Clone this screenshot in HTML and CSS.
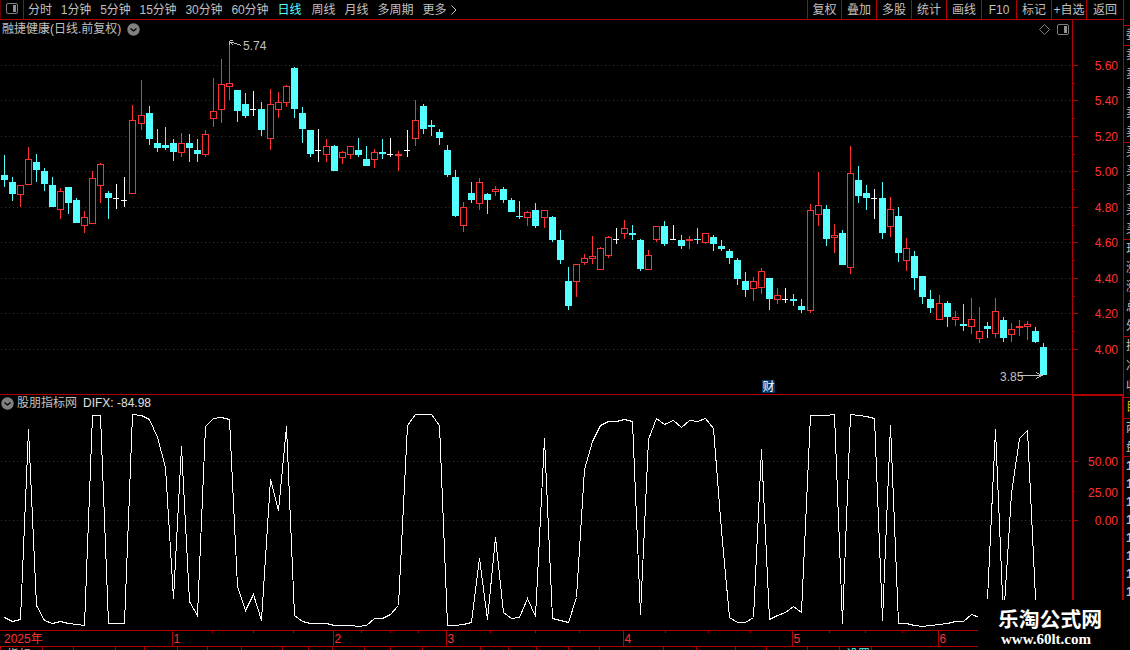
FILE: index.html
```
<!DOCTYPE html>
<html lang="zh-CN">
<head>
  <meta charset="UTF-8">
  <title>融捷健康 日线</title>
  <link rel="stylesheet" href="styles.css">
</head>
<body>
<div class="app">
  <div class="main">
    <div class="toolbar">
      <div class="toolbar-icon">
        <svg width="12" height="12" viewBox="0 0 12 12">
          <rect x="0.5" y="0.5" width="11" height="10" rx="1.5" class="icon-line"></rect>
          <rect x="7" y="2" width="3" height="7" class="icon-fill"></rect>
        </svg>
      </div>
      <div class="period">
        <span>分时</span><span>1分钟</span><span>5分钟</span><span>15分钟</span><span>30分钟</span><span>60分钟</span><span class="on">日线</span><span>周线</span><span>月线</span><span>多周期</span><span class="more">更多<svg width="6" height="10" viewBox="0 0 6 10"><path d="M0.5 0.5L5 5L0.5 9.5" class="arrow-line"></path></svg></span>
      </div>
      <div class="tools">
        <span class="first">复权</span><span>叠加</span><span>多股</span><span>统计</span><span>画线</span><span>F10</span><span>标记</span><span>+自选</span><span>返回</span>
      </div>
    </div>

    <!--K线-->
    <div class="panel kline">
      <div class="panel-title">
        <span>融捷健康(日线.前复权)</span>
        <svg width="13" height="13" viewBox="0 0 13 13"><circle cx="6.5" cy="6.5" r="6.2" class="round"></circle><path d="M3.5 5.5L6.5 8L9.5 5.5" class="round-arrow"></path></svg>
      </div>
      <svg id="kline" width="1123" height="374" viewBox="0 20 1123 374" shape-rendering="crispEdges">
        <g id="kgrid"></g>
        <g id="candles"></g>
        <path d="M229.5 40.5h3M229.5 41v4M230 42.5h3L241 45.5M231 43l2 2" class="mark-line"></path>
        <text x="243" y="50" class="mark">5.74</text>
        <path d="M1018 375.5h24M1036 372.5l6 3l-6 3" class="mark-line"></path>
        <text x="1000" y="381" class="mark">3.85</text>
        <path d="M1044.5 24.5l5 5l-5 5l-5 -5z" class="icon-line" shape-rendering="auto"></path>
        <rect x="1057.5" y="24.5" width="11" height="10" rx="1.5" class="icon-line" shape-rendering="auto"></rect>
        <rect x="1064" y="26" width="3" height="7" class="icon-fill"></rect>
        <path d="M762 380h11l2 2v11h-13z" class="cai"></path>
        <text x="762.5" y="391" class="cai-text">财</text>
      </svg>
    </div>

    <!--副图指标-->
    <div class="panel difx">
      <div class="panel-title">
        <svg width="13" height="13" viewBox="0 0 13 13"><circle cx="6.5" cy="6.5" r="6.2" class="round"></circle><path d="M3.5 5.5L6.5 8L9.5 5.5" class="round-arrow"></path></svg>
        <span>股朋指标网</span>
        <span class="value">DIFX: -84.98</span>
      </div>
      <svg id="difx" width="1123" height="235" viewBox="0 395 1123 235" shape-rendering="crispEdges">
        <g id="dgrid"></g>
        <polyline id="dline" class="dline"></polyline>
        <path d="M1073 395V630M1073 395h50" class="frame"></path>
        <path d="M1122.5 395V630" class="red"></path>
      </svg>
    </div>

    <svg id="dates" class="dates" width="1123" height="15" viewBox="0 631 1123 15" shape-rendering="crispEdges"></svg>
    <div id="tabs" class="tabs"></div>
  </div>

  <!--右侧盘口，只露出左边缘-->
  <div class="side">
    <div class="block h25"></div>
    <div class="block h19"><span>委</span></div>
    <div class="block h96"><span>卖</span><span>卖</span><span>卖</span><span>卖</span><span>卖</span></div>
    <div class="block h96"><span>买</span><span>买</span><span>买</span><span>买</span><span>买</span></div>
    <div class="block h96"><span>现</span><span>涨</span><span>涨</span><span>总</span><span>外</span></div>
    <div class="block h60"><span>换</span><span>净</span><span>收</span></div>
    <div class="block h20 yellow"><span>目</span></div>
    <div class="block h37"><span>两</span><span>盘</span></div>
    <div class="ticks"><span>1</span><span>1</span><span>1</span><span>1</span><span>1</span><span>1</span><span>1</span><span>1</span></div>
  </div>
</div>

<div class="watermark">
  <div class="wm-name">乐淘公式网</div>
  <div class="wm-url">www.60lt.com</div>
</div>
<script src="chart.js"></script>
</body>
</html>
```
FILE: styles.css
```
* {
  box-sizing: border-box;
}

body {
  margin: 0;
  background: #000000;
  color: #c0c0c0;
  font: 12px/18px "Liberation Sans", "Noto Sans CJK SC", sans-serif;
  overflow: hidden;
}

svg {
  display: block;
}

.app {
  display: flex;
  width: 1130px;
  height: 650px;
  overflow: hidden;
}

.main {
  width: 1123px;
  flex: none;
}

/* 顶部工具栏 */
.toolbar {
  display: flex;
  height: 20px;
  border-bottom: 1px solid #b00000;
  line-height: 20px;
  white-space: nowrap;
}

.toolbar-icon {
  width: 24px;
  padding: 3px 0 0 5px;
  border-left: 1px solid #600000;
  border-right: 1px solid #b00000;
}

.period {
  display: flex;
  gap: 9px;
  padding-left: 4px;
}

.period span:nth-child(-n+6) {
  letter-spacing: -0.1px;
}

.period .on {
  margin-right: 1px;
  color: #54ffff;
}

.period .more {
  display: flex;
  align-items: center;
  gap: 4px;
}

.tools {
  display: flex;
  margin-left: auto;
}

.tools span {
  width: 35px;
  border-left: 1px solid #b00000;
  text-align: center;
}

.tools .first {
  width: 34px;
}

.tools span:last-child {
  width: 37px;
}

/* 图表 */
.panel {
  position: relative;
  border-bottom: 1px solid #b00000;
}

.panel-title {
  position: absolute;
  display: flex;
  align-items: center;
  height: 18px;
  line-height: 20px;
  white-space: nowrap;
}

.kline .panel-title {
  left: 2px;
  top: 0;
  gap: 6px;
}

.difx .panel-title {
  left: 1px;
  top: -1px;
  gap: 3px;
}

.difx .value {
  margin-left: 3px;
  color: #e0e0e0;
}

.icon-line {
  fill: none;
  stroke: #808080;
}

.icon-fill {
  fill: #909090;
}

.arrow-line {
  fill: none;
  stroke: #c0c0c0;
}

.round {
  fill: #808080;
}

.round-arrow {
  fill: none;
  stroke: #000000;
  stroke-width: 1.3;
}

.grid {
  stroke: #900808;
  stroke-dasharray: 1 3;
}

.red {
  fill: none;
  stroke: #b00000;
}

.frame {
  fill: none;
  stroke: #b00000;
  stroke-width: 2;
}

.label {
  fill: #ff3232;
  font-size: 12px;
}

.up {
  fill: #000000;
  stroke: #ff3232;
}

.down {
  fill: #54ffff;
}

.down-line {
  stroke: #54ffff;
}

.flat {
  stroke: #ffffff;
}

.mark {
  fill: #c0c0c0;
}

.mark-line {
  fill: none;
  stroke: #c0c0c0;
}

.cai {
  fill: #003a70;
}

.cai-text {
  fill: #ffffff;
}

.dline {
  fill: none;
  stroke: #ffffff;
}

.tabs {
  display: flex;
  height: 4px;
  border-top: 1px solid #b00000;
  overflow: hidden;
}

.tabs span {
  flex: none;
  border-left: 1px solid #b00000;
  padding-left: 6px;
  line-height: 16px;
}

.tabs .on {
  color: #54ffff;
}

/* 右侧盘口 */
.side {
  width: 7px;
  flex: none;
  border-left: 1px solid #b00000;
  overflow: hidden;
}

.side span {
  width: 16px;
  flex: 1;
  padding-left: 2px;
  line-height: 19px;
}

.block {
  display: flex;
  flex-direction: column;
  border-bottom: 1px solid #b00000;
}

.h25 { height: 26px; }
.h19 { height: 20px; }
.h96 { height: 97px; }
.h60 { height: 61px; }
.h20 { height: 21px; }
.h37 { height: 38px; }

.yellow {
  color: #c0c000;
}

.ticks span {
  display: block;
  height: 18px;
  line-height: 18px;
  font-weight: bold;
  font-size: 13px;
}

/* 水印 */
.watermark {
  position: absolute;
  left: 978px;
  top: 600px;
  width: 152px;
  height: 50px;
  background: #000000;
  color: #ffffff;
  font-weight: bold;
  white-space: nowrap;
}

.wm-name {
  padding: 6px 0 0 20px;
  font-family: "Noto Sans CJK SC", sans-serif;
  font-size: 20.8px;
  line-height: 24px;
}

.wm-url {
  padding: 1px 0 0 23px;
  font-family: "Liberation Serif", serif;
  font-size: 15px;
  line-height: 16px;
}
```
FILE: chart.js
```
// x, 最高, 实体上, 实体下, 最低, 类型(r阳 c阴 w平)
var candles = [
  [4,155,175,180,187,"c"],[12,177,182,194,201,"c"],[20,185,185,195,207,"r"],[28,147,159,185,185,"r"],
  [36,154,162,170,182,"c"],[44,168,171,184,191,"c"],[52,177,185,207,207,"c"],[60,188,191,210,219,"r"],
  [68,187,187,203,214,"c"],[76,198,200,223,223,"c"],[84,211,217,226,233,"r"],[92,171,178,224,224,"r"],
  [100,163,164,186,203,"r"],[108,191,193,198,219,"c"],[116,184,198,199,209,"w"],[124,177,200,201,207,"w"],
  [132,105,120,194,194,"r"],[141,80,115,124,130,"r"],[149,106,113,139,145,"c"],[157,129,143,148,152,"c"],
  [165,127,145,148,150,"c"],[173,139,143,152,161,"c"],[181,133,143,153,157,"r"],[189,134,143,148,162,"c"],
  [197,139,150,154,162,"c"],[205,130,134,155,157,"r"],[213,78,111,119,127,"r"],[221,59,84,110,123,"r"],
  [229,41,83,87,100,"r"],[237,90,90,111,122,"c"],[245,93,104,116,118,"c"],[253,91,109,110,116,"w"],
  [261,102,109,130,136,"c"],[270,89,104,139,150,"r"],[278,92,102,110,118,"r"],[286,85,86,103,107,"r"],
  [294,67,68,109,118,"c"],[302,107,113,129,143,"c"],[310,130,130,154,157,"c"],[318,129,150,151,162,"w"],
  [326,139,146,155,162,"r"],[334,145,146,171,171,"c"],[342,151,152,158,164,"r"],[350,146,146,155,159,"r"],
  [358,138,150,155,157,"c"],[366,146,159,166,166,"c"],[374,149,152,160,168,"r"],[382,139,152,154,159,"c"],
  [390,138,154,155,157,"w"],[398,151,154,156,171,"r"],[407,130,150,151,157,"w"],[415,100,120,139,146,"r"],
  [423,104,106,129,134,"c"],[431,120,125,127,136,"c"],[439,129,132,138,145,"c"],[447,145,150,175,177,"c"],
  [455,170,177,216,217,"c"],[463,202,207,226,232,"r"],[471,182,193,200,203,"c"],[479,178,182,204,210,"r"],
  [487,193,194,200,214,"c"],[495,186,189,192,196,"r"],[503,187,189,200,203,"c"],[511,198,200,212,212,"c"],
  [519,201,216,217,219,"c"],[527,211,212,218,226,"r"],[535,203,210,226,228,"c"],[544,210,210,218,228,"r"],
  [552,216,217,240,242,"c"],[560,230,240,260,264,"c"],[568,267,281,306,310,"c"],[576,264,264,282,297,"r"],
  [584,254,258,263,265,"r"],[592,236,256,259,264,"r"],[600,247,248,270,270,"r"],[608,236,237,256,258,"r"],
  [616,228,239,240,244,"w"],[624,220,228,234,239,"r"],[632,225,233,235,240,"c"],[640,239,240,269,271,"c"],
  [648,250,255,270,270,"r"],[656,226,226,240,242,"r"],[664,221,226,244,246,"c"],[673,225,239,240,240,"w"],
  [681,235,240,246,249,"c"],[689,236,239,241,249,"r"],[697,228,239,240,244,"c"],[705,233,233,243,244,"r"],
  [713,235,237,244,251,"c"],[721,240,246,249,251,"c"],[729,249,251,258,264,"c"],[737,258,260,279,285,"c"],
  [745,272,281,290,297,"c"],[753,277,281,289,301,"r"],[761,268,271,288,294,"r"],[769,278,278,299,310,"c"],
  [777,288,295,300,304,"r"],[785,288,299,300,303,"w"],[793,294,299,301,306,"c"],[801,299,306,310,313,"c"],
  [810,204,210,311,313,"r"],[818,172,205,215,226,"r"],[826,205,209,239,246,"c"],[834,224,235,238,253,"r"],
  [842,230,233,265,265,"c"],[850,146,173,268,274,"r"],[858,166,180,196,203,"c"],[866,185,193,198,210,"c"],
  [874,189,198,199,219,"w"],[882,182,198,233,239,"c"],[890,197,209,227,237,"r"],[898,207,216,253,262,"c"],
  [906,238,248,261,271,"r"],[914,251,256,278,290,"c"],[922,276,276,297,304,"c"],[930,290,299,308,313,"c"],
  [939,295,303,320,320,"r"],[947,301,303,317,327,"c"],[955,311,317,320,326,"r"],[963,304,324,326,331,"c"],
  [971,298,319,327,334,"r"],[979,307,331,339,343,"r"],[987,322,326,329,338,"c"],[995,298,311,334,338,"r"],
  [1003,317,320,338,342,"c"],[1011,323,329,335,342,"r"],[1019,320,326,328,336,"r"],[1027,321,324,327,340,"r"],
  [1035,327,331,342,343,"c"],[1043,343,347,375,375,"c"]
];

// DIFX，每根K线一个点
var difx = [
  617,621,619,429,605,620,623,621,623,624,625,415,415,623,623,623,414,415,419,437,
  467,598,446,601,615,426,418,417,419,586,610,594,620,479,510,426,615,621,623,623,
  623,625,625,625,626,625,618,618,614,605,425,414,414,414,425,625,625,624,622,558,
  619,537,612,618,617,598,616,438,618,620,622,597,469,441,425,421,421,419,421,614,
  439,418,424,420,427,420,421,418,428,530,617,622,622,617,449,619,615,612,606,612,
  415,415,415,414,623,414,415,416,418,620,425,623,623,625,626,625,624,623,621,621,
  614,617,599,429,620,493,438,430,598,617
];

function line(x1, y1, x2, y2, cls) {
  return '<line x1="' + x1 + '" y1="' + y1 + '" x2="' + x2 + '" y2="' + y2 + '" class="' + cls + '"></line>';
}

function label(x, y, text, anchor) {
  return '<text x="' + x + '" y="' + y + '" text-anchor="' + anchor + '" class="label">' + text + '</text>';
}

function byId(id) {
  return document.getElementById(id);
}

// 网格和价格刻度
var prices = [[65, "5.60"], [100, "5.40"], [136, "5.20"], [171, "5.00"], [207, "4.80"], [242, "4.60"], [278, "4.40"], [313, "4.20"], [349, "4.00"]];
var html = line(1072.5, 20, 1072.5, 394, "red");
prices.forEach(function (p, i) {
  html += line(1, p[0] + 0.5, 1072, p[0] + 0.5, "grid");
  html += line(1073, p[0] + 0.5, 1078, p[0] + 0.5, "red");
  if (i < prices.length - 1) {
    html += line(1073, p[0] + 18.5, 1075, p[0] + 18.5, "red");
  }
  html += label(1118, p[0] + 5, p[1], "end");
});
byId("kgrid").innerHTML = html;

// K线
html = "";
candles.forEach(function (c) {
  var x = c[0], high = c[1], top = c[2], bottom = c[3], low = c[4];
  if (c[5] === "r") {
    html += line(x + 0.5, high, x + 0.5, low, "up");
    html += '<rect x="' + (x - 2.5) + '" y="' + (top + 0.5) + '" width="6" height="' + (bottom - top - 1) + '" class="up"></rect>';
  } else if (c[5] === "c") {
    html += line(x + 0.5, high, x + 0.5, low, "down-line");
    html += '<rect x="' + (x - 3) + '" y="' + top + '" width="7" height="' + (bottom - top) + '" class="down"></rect>';
  } else {
    html += line(x + 0.5, high, x + 0.5, low, "flat");
    html += line(x - 3, top + 0.5, x + 3, top + 0.5, "flat");
  }
});
byId("candles").innerHTML = html;

// 副图
html = "";
[[461, "50.00"], [520, "0.00"]].forEach(function (p) {
  html += line(1, p[0] + 0.5, 1072, p[0] + 0.5, "grid");
  html += line(1074, p[0] + 0.5, 1078, p[0] + 0.5, "red");
  html += label(1118, p[0] + 5, p[1], "end");
});
html += line(1074, 491.5, 1075, 491.5, "red") + label(1118, 497, "25.00", "end");
byId("dgrid").innerHTML = html;
byId("dline").setAttribute("points", difx.map(function (y, i) {
  return (candles[i][0] + 0.5) + "," + (y + 0.5);
}).join(" "));

// 日期轴
html = label(4, 643, "2025年", "start");
[[172, "1"], [333, "2"], [446, "3"], [623, "4"], [792, "5"], [938, "6"]].forEach(function (m) {
  html += line(m[0] + 0.5, 631, m[0] + 0.5, 646, "red") + label(m[0] + 1.5, 643, m[1], "start");
});
[212, 253, 293, 361, 390, 418, 490, 535, 579, 665, 708, 750, 829, 865, 902].forEach(function (x) {
  html += line(x + 0.5, 631, x + 0.5, 633, "red");
});
byId("dates").innerHTML = html;

// 底部标签，窗口里只露出顶边
var edges = [0, 42, 73, 115, 144, 177, 207, 241, 282, 308, 332, 364, 390, 422, 480, 508, 536, 568, 599, 663, 696, 735, 766, 807, 839, 871, 978];
var names = {0: "指标", 24: "设置"};
html = "";
for (var i = 0; i < edges.length - 1; i++) {
  html += '<span style="width:' + (edges[i + 1] - edges[i]) + 'px"' + (i === 24 ? ' class="on"' : '') + '>' + (names[i] || "") + '</span>';
}
byId("tabs").innerHTML = html;
```
